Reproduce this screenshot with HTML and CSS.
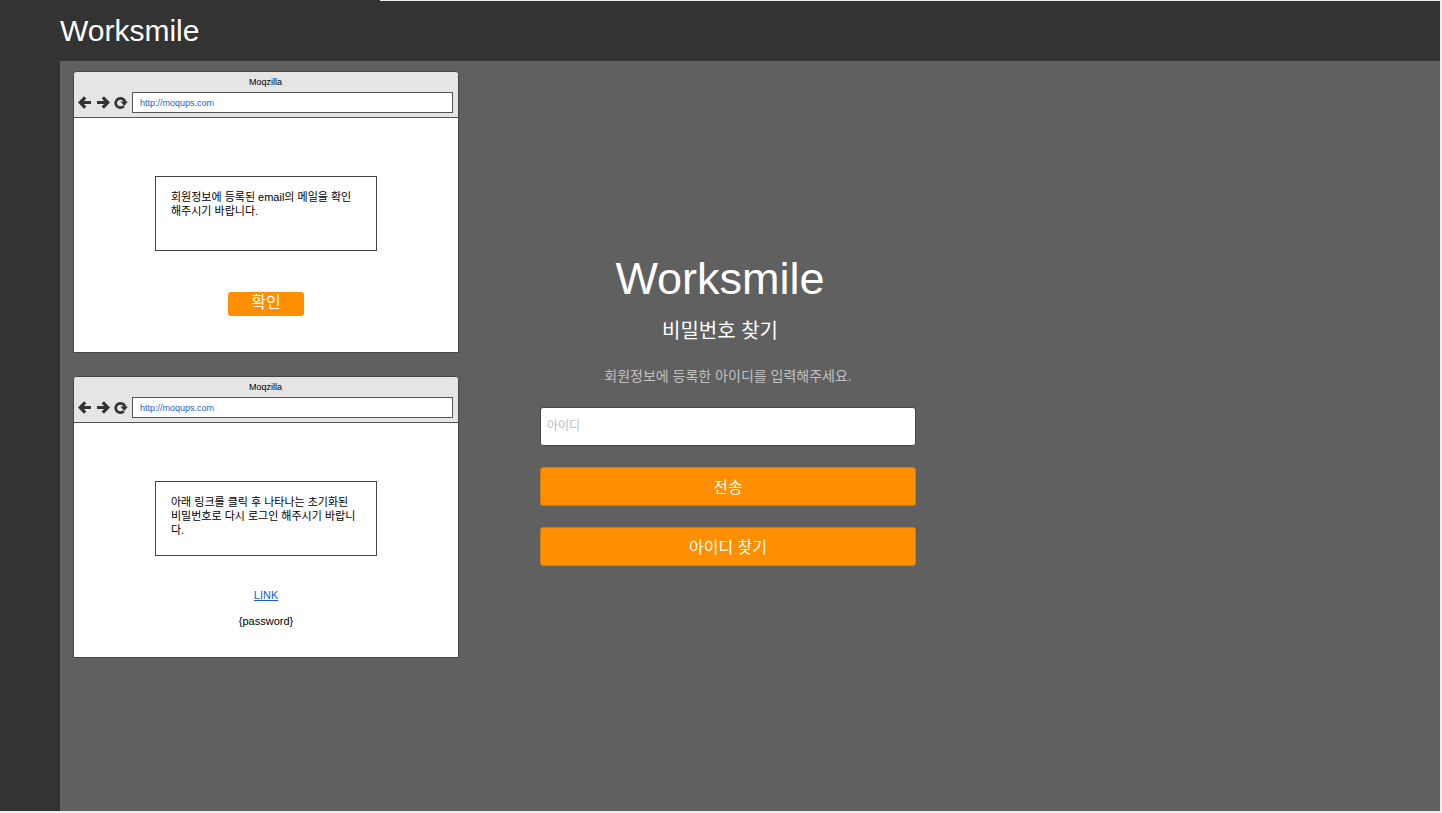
FILE: index.html
```html
<!DOCTYPE html>
<html lang="ko">
<head>
  <meta charset="utf-8">
  <meta name="viewport" content="width=device-width, initial-scale=1">
  <title>Worksmile</title>
  <link rel="stylesheet" href="styles.css">
</head>
<body>
  <svg class="sprite" aria-hidden="true">
    <symbol id="arrow" viewBox="0 0 14 14">
      <path d="M7.2 1.3 2.2 6.5l5 5.2M2.6 6.5H13" fill="none" stroke="currentColor" stroke-width="3.2"/>
    </symbol>
    <symbol id="reload" viewBox="0 0 14 14">
      <path d="M9.8 10.3A4.7 4.7 0 1 1 11 5.9" fill="none" stroke="currentColor" stroke-width="2.7"/>
      <path d="M6.4 5.6h7.4l-3.4 4.4z" fill="currentColor"/>
    </symbol>
  </svg>
  <div class="app">
    <header class="topbar"><div class="brand">Worksmile</div></header>
    <main class="content">
      <div class="windows">
        <section class="window">
          <div class="chrome">
            <div class="window-title">Moqzilla</div>
            <div class="toolbar">
              <button class="tool" type="button" aria-label="뒤로"><svg class="icon"><use href="#arrow"/></svg></button>
              <button class="tool" type="button" aria-label="앞으로"><svg class="icon forward"><use href="#arrow"/></svg></button>
              <button class="tool" type="button" aria-label="새로고침"><svg class="icon"><use href="#reload"/></svg></button>
              <input class="address" type="text" aria-label="주소" value="http://moqups.com">
            </div>
          </div>
          <div class="page">
            <p class="message">회원정보에 등록된 email의 메일을 확인<br>해주시기 바랍니다.</p>
            <button class="button confirm" type="button">확인</button>
          </div>
        </section>
        <section class="window">
          <div class="chrome">
            <div class="window-title">Moqzilla</div>
            <div class="toolbar">
              <button class="tool" type="button" aria-label="뒤로"><svg class="icon"><use href="#arrow"/></svg></button>
              <button class="tool" type="button" aria-label="앞으로"><svg class="icon forward"><use href="#arrow"/></svg></button>
              <button class="tool" type="button" aria-label="새로고침"><svg class="icon"><use href="#reload"/></svg></button>
              <input class="address" type="text" aria-label="주소" value="http://moqups.com">
            </div>
          </div>
          <div class="page">
            <p class="message">아래 링크를 클릭 후 나타나는 초기화된<br>비밀번호로 다시 로그인 해주시기 바랍니<br>다.</p>
            <div class="reset">
              <a class="link" href="#">LINK</a>
              <span>{password}</span>
            </div>
          </div>
        </section>
      </div>
      <form class="finder">
        <div class="heading">
          <h1 class="title">Worksmile</h1>
          <h2 class="subtitle">비밀번호 찾기</h2>
        </div>
        <label class="hint" for="user-id">회원정보에 등록한 아이디를 입력해주세요.</label>
        <input class="field" id="user-id" type="text" placeholder="아이디">
        <button class="button action" type="button">전송</button>
        <button class="button action" type="button">아이디 찾기</button>
      </form>
    </main>
  </div>
</body>
</html>
```
FILE: styles.css
```css
* {
  box-sizing: border-box;
}

body {
  margin: 0;
  padding: 0 2px 2px 0;
  background: #eee;
  color: #000;
  font-family: "Liberation Sans", "Noto Sans CJK KR", sans-serif;
}

button,
input {
  font-family: inherit;
}

.sprite {
  position: absolute;
  width: 0;
  height: 0;
}

.app {
  display: flex;
  flex-direction: column;
  min-height: calc(100vh - 2px);
  padding-left: 60px;
  background: linear-gradient(#eee, #eee) 380px 0 / 100% 1px no-repeat #333;
}

.topbar {
  height: 61px;
  padding-top: 14px;
}

.brand {
  color: #fff;
  font-size: 30px;
  line-height: 34px;
}

.content {
  flex: 1;
  display: flex;
  align-items: flex-start;
  gap: 81px;
  padding: 10px 13px;
  background: #606060;
}

.windows {
  flex: 0 1 386px;
  display: grid;
  gap: 23px;
}

.window {
  min-height: 282px;
  border: 1px solid #444;
  border-radius: 4px 4px 0 0;
  background: #fff;
  overflow: hidden;
}

.chrome {
  padding: 4px 5px 4px 4px;
  border-bottom: 1px solid #555;
  background: #e5e5e5;
}

.window-title {
  font-size: 9px;
  line-height: 13px;
  text-align: center;
}

.toolbar {
  display: flex;
  align-items: center;
  gap: 4px;
  padding-top: 3px;
}

.tool {
  display: flex;
  padding: 0;
  border: 0;
  background: none;
  color: #333;
}

.icon {
  width: 14px;
  height: 14px;
}

.forward {
  transform: scaleX(-1);
}

.address {
  flex: 1;
  min-width: 0;
  height: 21px;
  padding: 0 7px;
  border: 1px solid #555;
  background: #fff;
  color: #1c5fc4;
  font-size: 9px;
}

.page {
  display: flex;
  flex-direction: column;
  align-items: center;
  padding: 58px 16px 29px;
  font-size: 11px;
}

.message {
  width: 222px;
  max-width: 100%;
  min-height: 75px;
  margin: 0;
  padding: 13px 8px 13px 15px;
  border: 1px solid #444;
  line-height: 14px;
  word-break: break-all;
}

.reset {
  display: grid;
  gap: 13px;
  margin-top: 33px;
  line-height: 13px;
  text-align: center;
}

.link {
  color: #1c5fc4;
}

.button {
  padding: 0 0 2px;
  border: 0;
  border-radius: 3px;
  background: #ff8f00;
  color: #fff;
  font-size: 16px;
}

.confirm {
  width: 76px;
  height: 24px;
  margin-top: 41px;
  line-height: 22px;
}

.finder {
  flex: 0 1 376px;
  display: grid;
  gap: 21px;
  padding-top: 181px;
}

.heading {
  padding-right: 16px;
  color: #fff;
  text-align: center;
}

.title {
  margin: 0;
  font-size: 45px;
  font-weight: 400;
  line-height: 54px;
}

.subtitle {
  margin: 11px 0 0;
  font-size: 20px;
  font-weight: 400;
  line-height: 28px;
}

.hint {
  color: #c0c0c0;
  font-size: 14px;
  line-height: 20px;
  text-align: center;
}

.field {
  width: 100%;
  height: 39px;
  padding: 0 6px 2px;
  border: 1px solid #444;
  border-radius: 3px;
  background: #fff;
  font-size: 12px;
}

.field::placeholder {
  color: #b8bcc0;
}

.action {
  height: 39px;
  border: 1px solid #d87a08;
}
```
